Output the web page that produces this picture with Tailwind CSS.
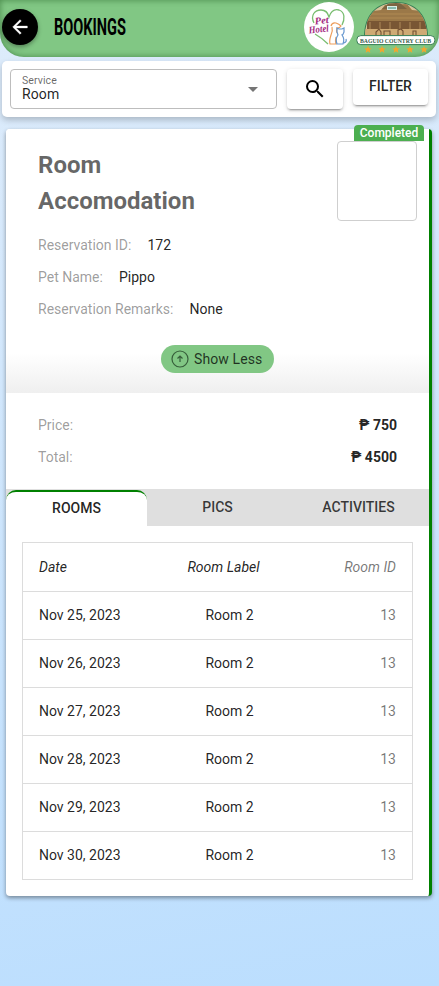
<!DOCTYPE html>
<html lang="en">
<head>
<meta charset="utf-8">
<title>Bookings</title>
<script src="https://cdn.jsdelivr.net/npm/@tailwindcss/browser@4"></script>
</head>
<body class="h-[986px] w-[439px] overflow-hidden bg-linear-170 from-[#deecfb] to-[#bbdefe] to-100% font-[Roboto,sans-serif] text-sm text-black/87">
<header class="flex h-[57px] items-start rounded-b-[24px] bg-[#81c784] pl-[2px] pr-[3px] pt-[2px] shadow-[inset_0_0_6px_rgba(0,60,0,0.45)]">
  <button class="mt-[7px] flex size-9 items-center justify-center rounded-full bg-black shadow-[0_2px_4px_rgba(0,0,0,0.35)]">
    <svg class="size-[22px]" viewBox="0 0 24 24" fill="#fff" stroke="#fff" stroke-width=".4"><path d="M20 11H7.83l5.59-5.59L12 4l-8 8 8 8 1.41-1.41L7.83 13H20v-2z"/></svg>
  </button>
  <svg class="ml-4 mt-3 h-6 w-[78px] overflow-visible" viewBox="0 0 78 24" fill="#000"><text x="0" y="20.500" font-family="Roboto" font-weight="700" font-size="24" textLength="72" lengthAdjust="spacingAndGlyphs">BOOKINGS</text></svg>
  <svg class="ml-auto size-[50px]" viewBox="0 0 50 50">
    <circle cx="25" cy="25" r="25" fill="#fff"/>
    <path d="M10 21C6 13 11 8 17 8c4 0 7 3 8 7C27 9 31 7 35 8c6 2 6 9 3 15M11 32Q18 36 24 42" fill="none" stroke="#79bd70" stroke-width="1.3"/>
    <g font-family="Liberation Serif" font-style="italic" font-weight="700" fill="#a3297f"><text x="11" y="22.500" font-size="10" transform="rotate(-6 11 22)" textLength="14" lengthAdjust="spacingAndGlyphs">Pet</text><text x="5" y="31.500" font-size="10" transform="rotate(-6 5 31)" textLength="20" lengthAdjust="spacingAndGlyphs">Hotel</text></g>
    <path d="M27 24q1-4 5-3 3 1 5 3-1 2-4 2-1 3 0 5M28 25q1 4-1 8-2 6-1 9h6q-1-3 0-7" fill="none" stroke="#ed9d5b" stroke-width="1.2"/>
    <path d="M33 26l2 1h3l2-1v4q-1 3-2 3 3 4 1 9h-6q-2-5 1-9l-1-3zM40 41q3-1 2-4" fill="none" stroke="#6697cf" stroke-width="1.2"/>
  </svg>
  <svg class="ml-[2px] h-[54px] w-20" viewBox="0 0 80 54">
    <defs><clipPath id="dome"><path d="M9 35C9 14 20 1 40 1S71 14 71 35z"/></clipPath></defs>
    <path d="M8 35C8 13 20 0 40 0S72 13 72 35z" fill="#367d54"/>
    <g clip-path="url(#dome)">
      <path d="M0 0h80v36H0z" fill="#d6c398"/>
      <path d="M9 19l8-10 8-1 4-5 22-1 5 6 10 1 7 11z" fill="#9b7848"/>
      <path d="M16 12h50M12 16h58" stroke="#b08a52" stroke-width="1"/>
      <path d="M26 7l7-6h11l7 6z" fill="#7d6441"/><path d="M31 4h10v4H31z" fill="#d9eee5"/><path d="M32 6h8" stroke="#358777"/>
      <path d="M11 19h60v10H11z" fill="#795634"/>
      <path d="M14 20v9M24 20v9M34 20v9M44 20v9M54 20v9M64 20v9" stroke="#b08a58" stroke-width="1"/>
      <path d="M8 27h64v9H8z" fill="#cfaa74"/>
      <path d="M20 34v-4l3-3 2 3v4M28 33v-4h6v4M42 34v-6l3-1 2 2v5M57 34v-5h3v5" stroke="#735033" stroke-width="1.1" fill="none"/>
    </g>
    <rect x="0.800" y="33.600" width="78" height="9" rx="4" fill="#fff" stroke="#367d54" stroke-width="1"/>
    <text x="4" y="40.600" font-family="Liberation Serif" font-weight="700" font-size="7" fill="#365b4a" textLength="71" lengthAdjust="spacingAndGlyphs">BAGUIO COUNTRY CLUB</text>
    <g fill="#f5a52d">
      <path id="star" d="M12 43.800l1 2.400 2.700.2-2 1.700.6 2.600-2.300-1.400-2.300 1.400.6-2.600-2-1.700 2.700-.2z"/>
      <use href="#star" x="14"/><use href="#star" x="28"/><use href="#star" x="42"/><use href="#star" x="56"/>
    </g>
  </svg>
</header>

<section class="ml-[2px] mt-1 flex h-14 w-[434px] items-start rounded-[5px] bg-white pl-2 pt-2 shadow-[0_3px_6px_rgba(0,0,0,0.22)]">
  <div class="flex h-10 w-[267px] items-center justify-between rounded-[4px] border border-[#bdbdbd] pl-[11px] pr-[11px]">
    <div class="pb-[3px]">
      <div class="text-[10.500px] leading-[13px] tracking-[0.1px] text-black/60">Service</div>
      <div class="text-[14px] leading-[14px] tracking-[0.1px] text-black/87">Room</div>
    </div>
    <svg class="size-6" viewBox="0 0 24 24" fill="#757575"><path d="M7 10l5 5 5-5z"/></svg>
  </div>
  <button class="ml-[10px] flex h-10 w-14 items-center justify-center rounded-[4px] bg-white shadow-[0_3px_1px_-2px_rgba(0,0,0,.2),0_2px_2px_rgba(0,0,0,.14),0_1px_5px_rgba(0,0,0,.12)]">
    <svg class="size-6" viewBox="0 0 24 24" fill="#000"><path d="M15.5 14h-.79l-.28-.27A6.47 6.47 0 0 0 16 9.5 6.5 6.5 0 1 0 9.5 16c1.61 0 3.09-.59 4.23-1.57l.27.28v.79l5 4.99L20.49 19l-4.99-5zm-6 0C7.01 14 5 11.99 5 9.5S7.01 5 9.5 5 14 7.01 14 9.5 11.99 14 9.5 14z"/></svg>
  </button>
  <button class="ml-[10px] h-9 w-[75px] rounded-[4px] bg-white pb-[2px] text-[14px] font-medium text-black/87 shadow-[0_3px_1px_-2px_rgba(0,0,0,.2),0_2px_2px_rgba(0,0,0,.14),0_1px_5px_rgba(0,0,0,.12)]">FILTER</button>
</section>

<main class="relative ml-[6px] mt-3 h-[767px] w-[426px] rounded-[4px] border-r-[3px] border-[#008000] bg-white shadow-[0_2px_4px_rgba(0,0,0,0.4)]">
  <div class="absolute right-[5px] top-[-4px] h-4 w-[70px] rounded-t-[4px] bg-[#4caf50] text-center text-[12px] font-medium leading-4 text-white">Completed</div>
  <div class="h-[264px] rounded-tl-[4px] bg-linear-to-b from-white from-85% to-[#efefef] pl-8 pt-[18px]">
    <div class="flex justify-between pr-3">
      <h1 class="w-44 text-[24px] font-bold leading-9 text-black/60">Room Accomodation</h1>
      <div class="mt-[-6px] size-20 rounded-[4px] border border-[#cfcfcf]"></div>
    </div>
    <dl class="mt-2 leading-8">
      <div class="flex gap-4"><dt class="text-black/40">Reservation ID:</dt><dd>172</dd></div>
      <div class="flex gap-4"><dt class="text-black/40">Pet Name:</dt><dd>Pippo</dd></div>
      <div class="flex gap-4"><dt class="text-black/40">Reservation Remarks:</dt><dd>None</dd></div>
    </dl>
    <button class="ml-[123px] mt-5 flex h-7 w-[113px] items-center rounded-full bg-[#81c784] pl-[10px] tracking-[0.1px] text-black/75">
      <svg class="mr-[5px] size-[18px]" viewBox="0 0 18 18" fill="none" stroke="#365e3a" stroke-width="1.2"><circle cx="9" cy="9" r="8"/><path d="M9 12V6.500M6.500 8.500l2.500-2.500 2.500 2.500"/></svg>Show Less
    </button>
  </div>
  <dl class="h-24 px-8 pt-4 leading-8">
    <div class="flex justify-between"><dt class="text-black/40">Price:</dt><dd class="font-bold">₱ 750</dd></div>
    <div class="flex justify-between"><dt class="text-black/40">Total:</dt><dd class="font-bold">₱ 4500</dd></div>
  </dl>
  <nav class="grid h-[37px] grid-cols-3 bg-[#dfdfdf] text-center font-medium leading-9 text-black/75">
    <div class="mt-px rounded-t-[10px] border-t-2 border-[#008000] bg-white leading-[33px] text-black/87">ROOMS</div>
    <div>PICS</div>
    <div>ACTIVITIES</div>
  </nav>
  <div class="ml-4 mt-4 w-[391px] divide-y divide-[#dcdcdc] border border-[#dcdcdc] leading-[47px]">
    <div class="grid h-[49px] grid-cols-[112px_145px_100px] pl-4 leading-[48px] italic"><div>Date</div><div class="text-center">Room Label</div><div class="text-right text-black/54">Room ID</div></div>
    <div class="grid h-12 grid-cols-[112px_157px_88px] pl-4"><div>Nov 25, 2023</div><div class="text-center">Room 2</div><div class="text-right text-black/54">13</div></div>
    <div class="grid h-12 grid-cols-[112px_157px_88px] pl-4"><div>Nov 26, 2023</div><div class="text-center">Room 2</div><div class="text-right text-black/54">13</div></div>
    <div class="grid h-12 grid-cols-[112px_157px_88px] pl-4"><div>Nov 27, 2023</div><div class="text-center">Room 2</div><div class="text-right text-black/54">13</div></div>
    <div class="grid h-12 grid-cols-[112px_157px_88px] pl-4"><div>Nov 28, 2023</div><div class="text-center">Room 2</div><div class="text-right text-black/54">13</div></div>
    <div class="grid h-12 grid-cols-[112px_157px_88px] pl-4"><div>Nov 29, 2023</div><div class="text-center">Room 2</div><div class="text-right text-black/54">13</div></div>
    <div class="grid h-[47px] grid-cols-[112px_157px_88px] pl-4"><div>Nov 30, 2023</div><div class="text-center">Room 2</div><div class="text-right text-black/54">13</div></div>
  </div>
</main>
</body>
</html>
